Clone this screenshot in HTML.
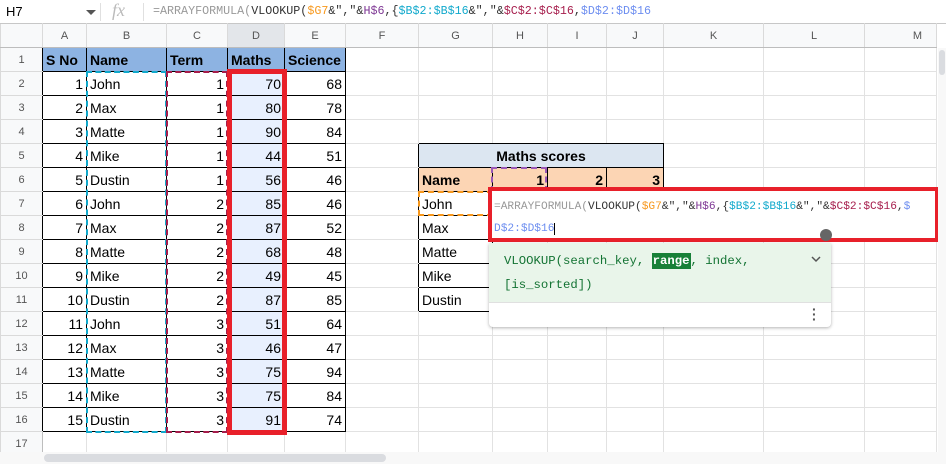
<!DOCTYPE html>
<html><head><meta charset="utf-8"><style>
*{margin:0;padding:0;box-sizing:border-box}
body{width:946px;height:464px;overflow:hidden;background:#fff;font-family:"Liberation Sans",Arial,sans-serif;position:relative}
#fb{position:absolute;left:0;top:0;width:946px;height:24px;background:#fff;border-bottom:1px solid #c7c7c7}
.mono{font-family:"Liberation Mono",monospace}
table{position:absolute;left:0;top:23px;border-collapse:collapse;table-layout:fixed}
td{border:1px solid #e2e2e2;height:24px;font-size:14px;color:#000;padding:0 3px;white-space:nowrap;overflow:hidden}
tr.h td{background:#f8f9fa;color:#555;font-size:11px;text-align:center;height:24px;border-color:#c7c7c7 #dadada;border-bottom:1px solid #bdbdbd}
td.rh{background:#f8f9fa;color:#555;font-size:11px;text-align:center;border-right:1px solid #bdbdbd;border-color:#dadada #bdbdbd #dadada #dadada}
td.rk{border-right:1px solid #000}
td.d{border:1px solid #000}
td.n{text-align:right}
td.hd{background:#8db3e2;font-weight:bold;border:1px solid #000}
td.dm{background:#e8f0fe}
td.bb{border-bottom:1px solid #000}
td.br{border-right:1px solid #000}
.ov{position:absolute}
</style></head><body>
<div id="fb">
 <div style="position:absolute;left:6px;top:4px;font-size:13px;color:#000">H7</div>
 <div style="position:absolute;left:86px;top:10px;width:0;height:0;border-left:5px solid transparent;border-right:5px solid transparent;border-top:5px solid #555"></div>
 <div style="position:absolute;left:100px;top:3px;width:1px;height:18px;background:#e0e0e0"></div>
 <div style="position:absolute;left:112px;top:0px;font-family:'Liberation Serif',serif;font-style:italic;font-size:18px;color:#bbb">fx</div>
 <div style="position:absolute;left:143px;top:3px;width:1px;height:18px;background:#e0e0e0"></div>
 <div class="mono" style="position:absolute;left:153px;top:4px;font-size:11.7px;color:#333;white-space:pre"><span style="color:#999">=ARRAYFORMULA(</span>VLOOKUP(<span style="color:#f7981d">$G7</span>&amp;","&amp;<span style="color:#7e3794">H$6</span>,{<span style="color:#11a9cc">$B$2:$B$16</span>&amp;","&amp;<span style="color:#a61d4c">$C$2:$C$16</span>,<span style="color:#6d8ef0">$D$2:$D$16</span></div>
</div>
<table>
<colgroup><col style="width:42px"><col style="width:44px"><col style="width:80px"><col style="width:61px"><col style="width:57px"><col style="width:61px"><col style="width:73px"><col style="width:74px"><col style="width:55px"><col style="width:59px"><col style="width:57px"><col style="width:100px"><col style="width:101px"><col style="width:72px"></colgroup>
<tr class="h"><td></td><td>A</td><td>B</td><td>C</td><td style="background:#e3e6ea">D</td><td>E</td><td>F</td><td>G</td><td>H</td><td>I</td><td>J</td><td>K</td><td>L</td><td style="text-align:right;padding-right:14px">M</td></tr>
<tr><td class="rh rk">1</td><td class="hd">S No</td><td class="hd">Name</td><td class="hd">Term</td><td class="hd">Maths</td><td class="hd">Science</td><td></td><td></td><td></td><td></td><td></td><td></td><td></td><td></td></tr>
<tr><td class="rh rk">2</td><td class="d n">1</td><td class="d">John</td><td class="d n">1</td><td class="d n dm">70</td><td class="d n">68</td><td></td><td></td><td></td><td></td><td></td><td></td><td></td><td></td></tr>
<tr><td class="rh rk">3</td><td class="d n">2</td><td class="d">Max</td><td class="d n">1</td><td class="d n dm">80</td><td class="d n">78</td><td></td><td></td><td></td><td></td><td></td><td></td><td></td><td></td></tr>
<tr><td class="rh rk">4</td><td class="d n">3</td><td class="d">Matte</td><td class="d n">1</td><td class="d n dm">90</td><td class="d n">84</td><td></td><td class="bb"></td><td class="bb"></td><td class="bb"></td><td class="bb"></td><td></td><td></td><td></td></tr>
<tr><td class="rh rk">5</td><td class="d n">4</td><td class="d">Mike</td><td class="d n">1</td><td class="d n dm">44</td><td class="d n">51</td><td class="br"></td><td colspan="4" class="d" style="background:#dce6f1;text-align:center;font-weight:bold">Maths scores</td><td></td><td></td><td></td></tr>
<tr><td class="rh rk">6</td><td class="d n">5</td><td class="d">Dustin</td><td class="d n">1</td><td class="d n dm">56</td><td class="d n">46</td><td class="br"></td><td class="d" style="background:#fcd5b4;font-weight:bold">Name</td><td class="d n" style="background:#fcd5b4;font-weight:bold">1</td><td class="d n" style="background:#fcd5b4;font-weight:bold">2</td><td class="d n" style="background:#fcd5b4;font-weight:bold">3</td><td></td><td></td><td></td></tr>
<tr><td class="rh rk">7</td><td class="d n">6</td><td class="d">John</td><td class="d n">2</td><td class="d n dm">85</td><td class="d n">46</td><td class="br"></td><td class="d">John</td><td></td><td></td><td></td><td></td><td></td><td></td></tr>
<tr><td class="rh rk">8</td><td class="d n">7</td><td class="d">Max</td><td class="d n">2</td><td class="d n dm">87</td><td class="d n">52</td><td class="br"></td><td class="d">Max</td><td></td><td></td><td></td><td></td><td></td><td></td></tr>
<tr><td class="rh rk">9</td><td class="d n">8</td><td class="d">Matte</td><td class="d n">2</td><td class="d n dm">68</td><td class="d n">48</td><td class="br"></td><td class="d">Matte</td><td></td><td></td><td></td><td></td><td></td><td></td></tr>
<tr><td class="rh rk">10</td><td class="d n">9</td><td class="d">Mike</td><td class="d n">2</td><td class="d n dm">49</td><td class="d n">45</td><td class="br"></td><td class="d">Mike</td><td></td><td></td><td></td><td></td><td></td><td></td></tr>
<tr><td class="rh rk">11</td><td class="d n">10</td><td class="d">Dustin</td><td class="d n">2</td><td class="d n dm">87</td><td class="d n">85</td><td class="br"></td><td class="d">Dustin</td><td></td><td></td><td></td><td></td><td></td><td></td></tr>
<tr><td class="rh rk">12</td><td class="d n">11</td><td class="d">John</td><td class="d n">3</td><td class="d n dm">51</td><td class="d n">64</td><td></td><td></td><td></td><td></td><td></td><td></td><td></td><td></td></tr>
<tr><td class="rh rk">13</td><td class="d n">12</td><td class="d">Max</td><td class="d n">3</td><td class="d n dm">46</td><td class="d n">47</td><td></td><td></td><td></td><td></td><td></td><td></td><td></td><td></td></tr>
<tr><td class="rh rk">14</td><td class="d n">13</td><td class="d">Matte</td><td class="d n">3</td><td class="d n dm">75</td><td class="d n">94</td><td></td><td></td><td></td><td></td><td></td><td></td><td></td><td></td></tr>
<tr><td class="rh rk">15</td><td class="d n">14</td><td class="d">Mike</td><td class="d n">3</td><td class="d n dm">75</td><td class="d n">84</td><td></td><td></td><td></td><td></td><td></td><td></td><td></td><td></td></tr>
<tr><td class="rh rk">16</td><td class="d n">15</td><td class="d">Dustin</td><td class="d n">3</td><td class="d n dm">91</td><td class="d n">74</td><td></td><td></td><td></td><td></td><td></td><td></td><td></td><td></td></tr>
<tr><td class="rh" style="height:20px">17</td><td style="height:20px"></td><td></td><td></td><td></td><td></td><td></td><td></td><td></td><td></td><td></td><td></td><td></td><td></td></tr>
</table>
<!-- selections -->
<div class="ov" style="left:86px;top:71px;width:81px;height:362px;border:2px dashed #11a9cc"></div>
<div class="ov" style="left:166px;top:71px;width:62px;height:362px;border:2px dashed #a61d4c"></div>
<div class="ov" style="left:227px;top:69px;width:60px;height:366px;border:5px solid #e8202a"></div>
<div class="ov" style="left:418px;top:191px;width:75px;height:25px;border:2px dashed #f7981d"></div>
<div class="ov" style="left:491px;top:167px;width:56px;height:25px;border:2px dashed #9b59b6"></div>
<!-- editor -->
<div class="ov" style="left:488px;top:187px;width:451px;height:55px;border:4px solid #e8202a;background:#fff"></div>
<div class="ov mono" style="left:494px;top:196px;width:440px;font-size:11.2px;line-height:22px;color:#333;white-space:pre"><span style="color:#999">=ARRAYFORMULA(</span>VLOOKUP(<span style="color:#f7981d">$G7</span>&amp;","&amp;<span style="color:#7e3794">H$6</span>,{<span style="color:#11a9cc">$B$2:$B$16</span>&amp;","&amp;<span style="color:#a61d4c">$C$2:$C$16</span>,<span style="color:#6d8ef0">$</span>
<span style="color:#6d8ef0">D$2:$D$16</span><span style="border-left:1px solid #000"></span></div>
<div class="ov" style="left:820px;top:229px;width:12px;height:12px;border-radius:6px;background:#666"></div>
<!-- suggestion -->
<div class="ov" style="left:489px;top:243px;width:342px;height:84px;background:#fff;box-shadow:0 1px 3px rgba(0,0,0,.3);border-radius:0 0 4px 4px"></div>
<div class="ov" style="left:489px;top:243px;width:342px;height:60px;background:#e9f5ea;border-bottom:1px solid #e0e0e0"></div>
<div class="ov mono" style="left:504px;top:249px;font-size:12.3px;line-height:24px;color:#137333;white-space:pre">VLOOKUP(search_key, <span style="background:#188038;color:#fff;font-weight:bold;padding:1px 1px">range</span>, index,
[is_sorted])</div>
<svg class="ov" style="left:810px;top:255px" width="12" height="8"><path d="M2 2 L6 6 L10 2" stroke="#555" stroke-width="1.5" fill="none"/></svg>
<div class="ov" style="left:812px;top:307px;font-size:14px;color:#555;font-weight:bold;line-height:5px;width:4px;text-align:center">·<br>·<br>·</div>
<!-- scrollbars -->
<div class="ov" style="left:938px;top:48px;width:8px;height:416px;background:#f8f8f8"></div>
<div class="ov" style="left:939px;top:50px;width:6px;height:25px;background:#dadce0;border-radius:3px"></div>
<div class="ov" style="left:0;top:452px;width:946px;height:12px;background:#f8f8f8"></div>
<div class="ov" style="left:44px;top:454px;width:342px;height:8px;background:#dadce0;border-radius:4px"></div>
</body></html>
